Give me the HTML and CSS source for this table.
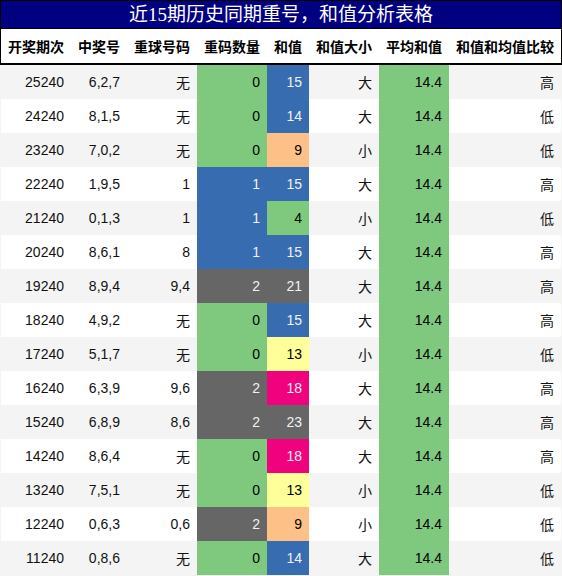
FILE: index.html
```html
<!DOCTYPE html>
<html lang="zh-CN">
<head>
    <meta charset="UTF-8">
    <meta name="viewport" content="width=device-width, initial-scale=1.0">
    <title>近15期历史同期重号，和值分析表格</title>
    <link rel="stylesheet" href="styles.css">
</head>
<body>
    <div class="title">近15期历史同期重号，和值分析表格</div>
    <table class="sheet">
        <thead>
            <tr>
                <th>开奖期次</th>
                <th>中奖号</th>
                <th>重球号码</th>
                <th>重码数量</th>
                <th>和值</th>
                <th>和值大小</th>
                <th>平均和值</th>
                <th>和值和均值比较</th>
            </tr>
        </thead>
        <tbody>
            <tr><td>25240</td><td>6,2,7</td><td>无</td><td class="c-green">0</td><td class="c-blue">15</td><td>大</td><td class="c-green">14.4</td><td>高</td></tr>
            <tr><td>24240</td><td>8,1,5</td><td>无</td><td class="c-green">0</td><td class="c-blue">14</td><td>大</td><td class="c-green">14.4</td><td>低</td></tr>
            <tr><td>23240</td><td>7,0,2</td><td>无</td><td class="c-green">0</td><td class="c-orange">9</td><td>小</td><td class="c-green">14.4</td><td>低</td></tr>
            <tr><td>22240</td><td>1,9,5</td><td>1</td><td class="c-blue">1</td><td class="c-blue">15</td><td>大</td><td class="c-green">14.4</td><td>高</td></tr>
            <tr><td>21240</td><td>0,1,3</td><td>1</td><td class="c-blue">1</td><td class="c-green">4</td><td>小</td><td class="c-green">14.4</td><td>低</td></tr>
            <tr><td>20240</td><td>8,6,1</td><td>8</td><td class="c-blue">1</td><td class="c-blue">15</td><td>大</td><td class="c-green">14.4</td><td>高</td></tr>
            <tr><td>19240</td><td>8,9,4</td><td>9,4</td><td class="c-gray">2</td><td class="c-gray">21</td><td>大</td><td class="c-green">14.4</td><td>高</td></tr>
            <tr><td>18240</td><td>4,9,2</td><td>无</td><td class="c-green">0</td><td class="c-blue">15</td><td>大</td><td class="c-green">14.4</td><td>高</td></tr>
            <tr><td>17240</td><td>5,1,7</td><td>无</td><td class="c-green">0</td><td class="c-yellow">13</td><td>小</td><td class="c-green">14.4</td><td>低</td></tr>
            <tr><td>16240</td><td>6,3,9</td><td>9,6</td><td class="c-gray">2</td><td class="c-pink">18</td><td>大</td><td class="c-green">14.4</td><td>高</td></tr>
            <tr><td>15240</td><td>6,8,9</td><td>8,6</td><td class="c-gray">2</td><td class="c-gray">23</td><td>大</td><td class="c-green">14.4</td><td>高</td></tr>
            <tr><td>14240</td><td>8,6,4</td><td>无</td><td class="c-green">0</td><td class="c-pink">18</td><td>大</td><td class="c-green">14.4</td><td>高</td></tr>
            <tr><td>13240</td><td>7,5,1</td><td>无</td><td class="c-green">0</td><td class="c-yellow">13</td><td>小</td><td class="c-green">14.4</td><td>低</td></tr>
            <tr><td>12240</td><td>0,6,3</td><td>0,6</td><td class="c-gray">2</td><td class="c-orange">9</td><td>小</td><td class="c-green">14.4</td><td>低</td></tr>
            <tr><td>11240</td><td>0,8,6</td><td>无</td><td class="c-green">0</td><td class="c-blue">14</td><td>大</td><td class="c-green">14.4</td><td>低</td></tr>
        </tbody>
    </table>
</body>
</html>
```

FILE: styles.css
```css
body {
    margin: 0;
    padding: 0;
    background: #f4f4f4;
    font-family: "Liberation Sans", "Noto Sans CJK SC", sans-serif;
    font-size: 14px;
    color: #111;
}

.title {
    height: 27px;
    line-height: 27px;
    background: #000080;
    border: 1px solid #000;
    color: #fff;
    text-align: center;
    font-family: "Liberation Serif", "Noto Sans CJK SC", serif;
    font-size: 19px;
}

.sheet {
    border-collapse: separate;
    border-spacing: 0;
}

.sheet th {
    height: 34px;
    padding: 0 7px;
    background: #fff;
    border-bottom: 2px solid #000;
    font-family: "Noto Sans CJK SC", sans-serif;
    font-weight: bold;
    white-space: nowrap;
    color: #000;
}

.sheet th:first-child {
    border-left: 1px solid #000;
}

.sheet th:last-child {
    border-right: 1px solid #000;
}

.sheet td {
    height: 34px;
    padding: 0 7px;
    text-align: right;
    white-space: nowrap;
}

.sheet td:first-child {
    border-left: 1px solid #f4f4f4;
}

.sheet td:last-child {
    border-right: 1px solid #f4f4f4;
}

.sheet tbody tr:nth-child(odd) td {
    background: #f4f4f4;
}

.sheet tbody tr:nth-child(even) td {
    background: #fff;
}

.sheet tbody tr td.c-green { background: #7fc97f; color: #000; }
.sheet tbody tr td.c-blue { background: #386cb0; color: #f1f1f1; }
.sheet tbody tr td.c-orange { background: #fdc086; color: #000; }
.sheet tbody tr td.c-yellow { background: #ffff99; color: #000; }
.sheet tbody tr td.c-pink { background: #f0027f; color: #f1f1f1; }
.sheet tbody tr td.c-gray { background: #666666; color: #f1f1f1; }
```
